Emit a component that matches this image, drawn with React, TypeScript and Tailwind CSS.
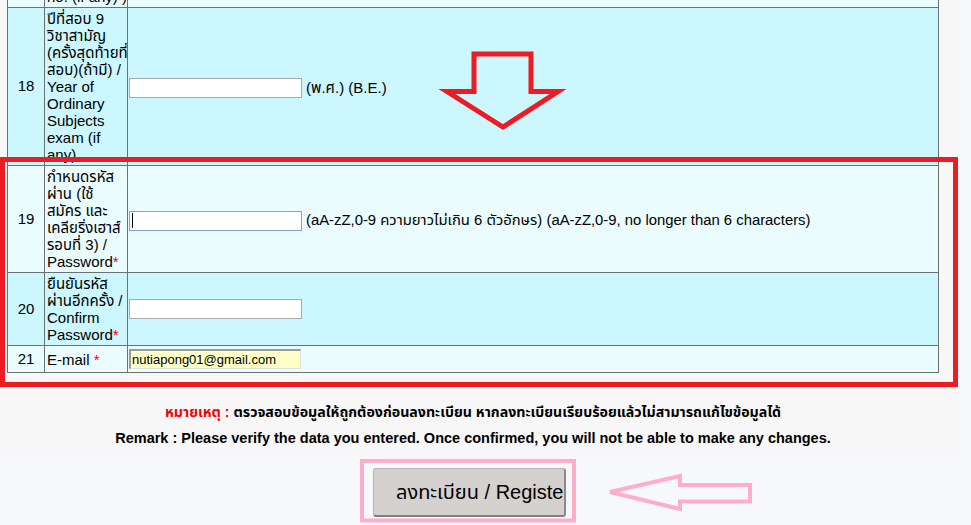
import React from "react";

const B = "border-[#6b7272]";
const CYAN = "bg-[#ccf7ff]";
const LIGHT = "bg-[#ebfcff]";

function Star() {
  return <span className="text-[#ff0000]">*</span>;
}

function Lines({ lines }: { lines: React.ReactNode[] }) {
  return (
    <div className="flex flex-col">
      {lines.map((l, i) => (
        <div key={i} className="whitespace-nowrap leading-[17px]">
          {l}
        </div>
      ))}
    </div>
  );
}

function Row({
  h,
  bg,
  num,
  label,
  children,
}: {
  h: string;
  bg: string;
  num?: string;
  label: React.ReactNode;
  children?: React.ReactNode;
}) {
  return (
    <div className={`flex ${h} border-b ${B} ${bg} overflow-hidden`}>
      <div className={`w-[37px] shrink-0 border-r ${B} flex items-center justify-center`}>
        {num}
      </div>
      <div className={`w-[83px] shrink-0 border-r ${B} pl-[2px] flex items-center overflow-hidden`}>
        {label}
      </div>
      <div className="flex-1 flex items-center pl-[1px]">{children}</div>
    </div>
  );
}

function Field({ focused, className = "" }: { focused?: boolean; className?: string }) {
  return (
    <div
      className={`w-[173px] h-[20px] bg-white border ${
        focused ? "border-[#7aa6de]" : "border-[#a9a9a9]"
      } flex items-center ${className}`}
    >
      {focused && <div className="ml-[2px] w-px h-[15px] bg-black" />}
    </div>
  );
}

export default function App() {
  return (
    <div className="relative w-[971px] h-[525px] overflow-hidden bg-[#f7f8fc] font-['Liberation_Sans','Noto_Sans_Thai','Noto_Sans',sans-serif] text-[15px] text-black">
      <div className="w-[958px] bg-[#f7f7f7] pb-[7px]">
        <div className={`ml-[7px] w-[932px] border-l border-r ${B}`}>
          {/* fragment row */}
          <div className={`flex h-[8px] border-b ${B} ${LIGHT} overflow-hidden`}>
            <div className={`w-[37px] shrink-0 border-r ${B}`} />
            <div className={`w-[83px] shrink-0 border-r ${B} pl-[2px] overflow-hidden`}>
              <div className="mt-[-12px] leading-[17px] whitespace-nowrap">no. (if any) )</div>
            </div>
            <div className="flex-1" />
          </div>

          <Row
            h="h-[158px]"
            bg={CYAN}
            num="18"
            label={
              <Lines
                lines={[
                  "ปีที่สอบ 9",
                  "วิชาสามัญ",
                  "(ครั้งสุดท้ายที่",
                  "สอบ)(ถ้ามี) /",
                  "Year of",
                  "Ordinary",
                  "Subjects",
                  "exam (if",
                  "any)",
                ]}
              />
            }
          >
            <Field className="mt-[3px]" />
            <span className="ml-[4px] mt-[3px] whitespace-nowrap">(พ.ศ.) (B.E.)</span>
          </Row>

          <Row
            h="h-[107px]"
            bg={LIGHT}
            num="19"
            label={
              <Lines
                lines={[
                  "กำหนดรหัส",
                  "ผ่าน (ใช้",
                  "สมัคร และ",
                  "เคลียริ่งเฮาส์",
                  "รอบที่ 3) /",
                  <>
                    Password
                    <Star />
                  </>,
                ]}
              />
            }
          >
            <Field focused className="mt-[3px]" />
            <span className="ml-[4px] mt-[3px] whitespace-nowrap text-[14.85px]">
              (aA-zZ,0-9 ความยาวไม่เกิน 6 ตัวอักษร) (aA-zZ,0-9, no longer than 6 characters)
            </span>
          </Row>

          <Row
            h="h-[73px]"
            bg={CYAN}
            num="20"
            label={
              <Lines
                lines={[
                  "ยืนยันรหัส",
                  "ผ่านอีกครั้ง /",
                  "Confirm",
                  <>
                    Password
                    <Star />
                  </>,
                ]}
              />
            }
          >
            <Field />
          </Row>

          <Row
            h="h-[27px]"
            bg={LIGHT}
            num="21"
            label={
              <div className="whitespace-nowrap leading-[17px]">
                E-mail <Star />
              </div>
            }
          >
            <div className="w-[172px] h-[20px] bg-[#ffffc8] border-t-2 border-l-2 border-t-[#9a9a9a] border-l-[#9a9a9a] border-r border-b border-r-[#e0e0e0] border-b-[#e0e0e0] flex items-center pl-[1px] text-[13px] leading-[16px] whitespace-nowrap">
              nutiapong01@gmail.com
            </div>
          </Row>
        </div>

        <div className="ml-[7px] w-[932px] pt-[26px] text-center font-bold leading-[26px]">
          <div className="whitespace-nowrap text-[14.2px]">
            <span className="text-[#ff0000]">หมายเหตุ :</span> ตรวจสอบข้อมูลให้ถูกต้องก่อนลงทะเบียน หากลงทะเบียนเรียบร้อยแล้วไม่สามารถแก้ไขข้อมูลได้
          </div>
          <div className="whitespace-nowrap text-[14.5px]">
            Remark : Please verify the data you entered. Once confirmed, you will not be able to make any changes.
          </div>
        </div>
      </div>

      <div className="pt-[10px] pl-[373px]">
        <div className="w-[193px] h-[49px] rounded-[3px] bg-[#d4d1cf] border border-[#b4b4b4] border-b-2 border-r-2 border-b-[#7f7f7f] border-r-[#8a8a8a] overflow-hidden flex items-center pl-[22px] whitespace-nowrap text-[20px]">
          ลงทะเบียน / Register
        </div>
      </div>

      <svg
        className="absolute inset-0 pointer-events-none"
        width={971}
        height={525}
        viewBox="0 0 971 525"
      >
        <rect x={2.5} y={159.5} width={953} height={225} fill="none" stroke="#ed1c24" strokeWidth={5} />
        <polygon
          points="474,54 531,54 531,91.5 558,91.5 503,127 447,91.5 474,91.5"
          fill="none"
          stroke="#ed1c24"
          strokeWidth={5}
        />
        <rect x={362} y={461} width={212} height={59.5} fill="none" stroke="#ffaec9" strokeWidth={4} />
        <polygon
          points="610,492 680,476 680,485 750,485 750,501.5 680,501.5 680,509"
          fill="none"
          stroke="#ffaec9"
          strokeWidth={4}
        />
      </svg>
    </div>
  );
}
